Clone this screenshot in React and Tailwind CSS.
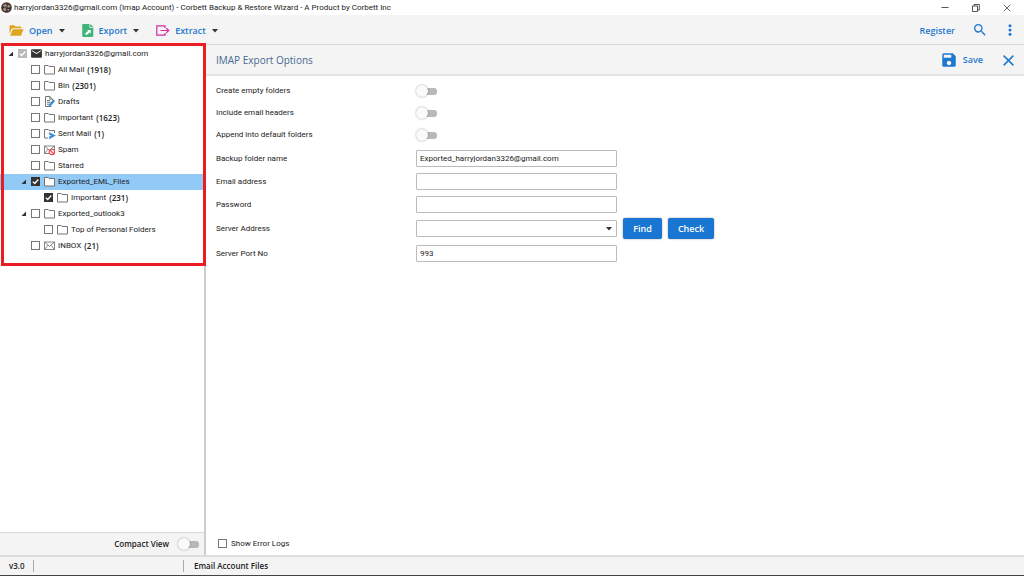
import { useState } from 'react'
import { MdEmail, MdSave, MdSearch } from 'react-icons/md'

const tree = [
  { id: 'root', depth: 0, label: 'harryjordan3326@gmail.com', icon: 'account', open: true, state: 'partial' },
  { id: 'all', depth: 1, label: 'All Mail', count: 1918, icon: 'folder' },
  { id: 'bin', depth: 1, label: 'Bin', count: 2301, icon: 'folder' },
  { id: 'drafts', depth: 1, label: 'Drafts', icon: 'draft' },
  { id: 'important', depth: 1, label: 'Important', count: 1623, icon: 'folder' },
  { id: 'sent', depth: 1, label: 'Sent Mail', count: 1, icon: 'sent' },
  { id: 'spam', depth: 1, label: 'Spam', icon: 'spam' },
  { id: 'starred', depth: 1, label: 'Starred', icon: 'folder' },
  { id: 'eml', depth: 1, label: 'Exported_EML_Files', icon: 'folder', open: true, state: 'checked', selected: true },
  { id: 'eml-important', depth: 2, label: 'Important', count: 231, icon: 'folder', state: 'checked' },
  { id: 'outlook', depth: 1, label: 'Exported_outlook3', icon: 'folder', open: true },
  { id: 'top', depth: 2, label: 'Top of Personal Folders', icon: 'folder' },
  { id: 'inbox', depth: 1, label: 'INBOX', count: 21, icon: 'mail' },
]

const indents = ['pl-[7px]', 'pl-[20px]', 'pl-[33px]']

function Caret() {
  return (
    <svg viewBox="0 0 6 4" className="w-[6px] h-[4px]" fill="#333">
      <path d="M0 0h6L3 3.6z" />
    </svg>
  )
}

function TreeIcon({ name }) {
  if (name === 'account') return <MdEmail className="w-[13px] h-[13px] -mx-px text-[#333] shrink-0" />
  return (
    <svg viewBox="0 0 11 11" className="w-[11px] h-[11px] shrink-0 overflow-visible">
      {name === 'folder' && (
        <path d="M.5 10V1.5h3.7l.8 1h5.5V10z" fill="#fff" stroke="#666" strokeWidth=".9" />
      )}
      {name === 'draft' && (
        <g fill="none" stroke="#666" strokeWidth=".9">
          <path d="M7.5 10.5h-6V.5h4.3l2.7 2.7v1M5.8.5v2.7h2.7M3 4.5h3M3 6.3h3.5M3 8.2h2" />
          <path d="M10.2 4.2 5.8 9.2" stroke="#2f86d6" strokeWidth="2.2" />
          <path d="m5 8.4-.6 2 2-.6z" fill="#2f86d6" stroke="none" />
        </g>
      )}
      {name === 'sent' && (
        <>
          <path d="M4 10H.5V1.5h3.7l.8 1h5.5V5" fill="none" stroke="#666" strokeWidth=".9" />
          <path d="M5 4.4 11.5 7.6 5 11l.8-2.8 3-.6-3-.6z" fill="#2f86d6" stroke="#2f86d6" strokeWidth=".4" />
        </>
      )}
      {(name === 'spam' || name === 'mail') && (
        <path d="M.5 2h10v7.5H.5zM.5 2l5 4.3 5-4.3M.5 9.5 4 5.2M10.5 9.5 7 5.2" fill="none" stroke="#555" strokeWidth=".7" />
      )}
      {name === 'spam' && (
        <g stroke="#e8434a" strokeWidth="1.1">
          <circle cx="7.9" cy="7.9" r="2.7" fill="#fff" />
          <path d="m6 6 3.8 3.8" />
        </g>
      )}
    </svg>
  )
}

function CheckBox({ id, state }) {
  const [on, setOn] = useState(Boolean(state))
  const tone = state === 'partial' ? 'border-[#b9b9b9] checked:bg-[#b9b9b9]' : 'border-[#777] checked:bg-[#333] checked:border-[#333]'
  return (
    <span className="grid w-[9px] h-[9px] shrink-0">
      <input
        id={id}
        type="checkbox"
        checked={on}
        onChange={(e) => setOn(e.target.checked)}
        className={`peer col-start-1 row-start-1 appearance-none w-[9px] h-[9px] border bg-white ${tone}`}
      />
      <svg viewBox="0 0 9 9" className="col-start-1 row-start-1 w-[9px] h-[9px] pointer-events-none invisible peer-checked:visible" fill="none" stroke="#fff" strokeWidth="1.3">
        <path d="m1.8 4.6 1.9 1.9 3.6-4" />
      </svg>
    </span>
  )
}

function Toggle({ id }) {
  const [on, setOn] = useState(false)
  return (
    <span className="grid items-center w-[21px] h-[13px] shrink-0">
      <input
        id={id}
        type="checkbox"
        role="switch"
        checked={on}
        onChange={(e) => setOn(e.target.checked)}
        className="peer col-start-1 row-start-1 appearance-none w-[17px] h-[7px] ml-[4px] rounded-[3px] bg-[#b8b8b8] checked:bg-[#8fc2f0]"
      />
      <span className="col-start-1 row-start-1 w-[12px] h-[12px] rounded-full bg-[#fafafa] shadow-[0_0_2px_rgba(0,0,0,0.4)] pointer-events-none peer-checked:ml-[9px]" />
    </span>
  )
}

function TreeRow({ node }) {
  return (
    <li className={`flex items-center h-4 pb-px ${indents[node.depth]} ${node.selected ? 'bg-[#91c9f7]' : ''}`}>
      <span className="w-[11px] shrink-0 flex">
        {node.open && (
          <svg viewBox="0 0 5 5" className="w-[5px] h-[5px] ml-px" fill="#333">
            <path d="M5 .5v4.5H.5z" />
          </svg>
        )}
      </span>
      <CheckBox id={`node-${node.id}`} state={node.state} />
      <label htmlFor={`node-${node.id}`} className="flex items-center ml-[4px] whitespace-nowrap">
        <TreeIcon name={node.icon} />
        <span className="ml-[3px]">{node.label}</span>
        {node.count && <span className="ml-[3px] font-semibold font-['Open_Sans',sans-serif]">({node.count})</span>}
      </label>
    </li>
  )
}

function ToolButton({ icon, children, className }) {
  return (
    <button type="button" className={`flex items-center text-[9px] font-semibold text-[#1f78cf] font-['Open_Sans',sans-serif] ${className}`}>
      {icon}
      <span className="ml-[5px] mr-[6px]">{children}</span>
      <Caret />
    </button>
  )
}

function Field({ id, label, tall, children }) {
  return (
    <div className={`flex items-center ${tall ? 'h-[25px]' : 'h-[23px]'}`}>
      <label htmlFor={id} className="w-[200px] shrink-0">{label}</label>
      {children}
    </div>
  )
}

const inputStyle = 'w-[201px] h-[17px] px-[3px] border border-[#bbb] rounded-[1px] bg-white outline-none'
const blueButton = "ml-[6px] h-[21px] rounded-[2px] bg-[#1976d2] text-white text-[9px] font-semibold font-['Open_Sans',sans-serif] shadow-[0_0_2px_rgba(0,0,0,0.4)]"

export default function App() {
  return (
    <div className="flex flex-col h-screen bg-white text-[8px] leading-[12px] text-[#222] font-['Roboto','Open_Sans',sans-serif] overflow-hidden">
      {/* Title bar */}
      <header className="flex items-center h-[15px] shrink-0 pl-px">
        <svg viewBox="0 0 12 12" className="w-[11px] h-[11px]">
          <circle cx="6" cy="6" r="5.8" fill="#40322e" />
          <path d="M2 3.5 5 2l1.5 2L4 5zM7.5 3l2.7 1.2-1 2.2-2-1zM2 7l3-.5L6 9l-2.5 1z" fill="#b9917c" />
          <path d="m6.5 7.5 3 .5-1.5 2zM1 5l4 1 6-1" fill="#84939a" />
        </svg>
        <h1 className="ml-[2px]">harryjordan3326@gmail.com (Imap Account) - Corbett Backup &amp; Restore Wizard - A Product by Corbett Inc</h1>
        <div className="ml-auto flex items-center gap-[23px] pr-[13px]">
          <button type="button" aria-label="Minimize">
            <svg viewBox="0 0 8 8" className="w-2 h-2" stroke="#555"><path d="M.5 3.5h7" /></svg>
          </button>
          <button type="button" aria-label="Restore">
            <svg viewBox="0 0 8 8" className="w-2 h-2" fill="none" stroke="#444" strokeWidth=".9"><path d="M.5 2h5v5.5h-5zM2 2V.5h5.3V6H5.5" /></svg>
          </button>
          <button type="button" aria-label="Close window">
            <svg viewBox="0 0 8 8" className="w-2 h-2" stroke="#444" strokeWidth=".8"><path d="m.8.8 6.4 6.4M7.2.8.8 7.2" /></svg>
          </button>
        </div>
      </header>

      {/* Toolbar */}
      <nav className="flex items-center h-[30px] shrink-0 bg-[#f4f4f4] border-b border-[#d8d8d8] pt-[2px] pl-[9px] pr-[12px]">
        <ToolButton
          icon={
            <svg viewBox="0 0 14 11" className="w-[15px] h-[11px]" fill="#dda520">
              <path d="M0 9V1.2C0 .5.4.2 1 .2h3.6l1.2 1.3h5c.7 0 1 .4 1 1v.8H3.2c-.6 0-1 .3-1.2.8z" />
              <path d="M3.3 4.2H14l-2.2 5.9c-.2.4-.5.6-1 .6H.6z" />
            </svg>
          }
        >
          Open
        </ToolButton>
        <ToolButton
          className="ml-[17px]"
          icon={
            <svg viewBox="0 0 12 13" className="w-[12px] h-[13px]">
              <path d="M1.3 0h6.2v3.7h3.8v8.1c0 .7-.5 1.2-1.2 1.2H1.3C.6 13 .2 12.5.2 11.8V1.2C.2.5.6 0 1.3 0zM8.3 0l3 2.9h-3z" fill="#3fb57a" />
              <path d="M3.4 10.8V9.2l2.7-2.3-1-1h3.6v3.5l-1.1-1-2.6 2.4z" fill="#fff" />
            </svg>
          }
        >
          Export
        </ToolButton>
        <ToolButton
          className="ml-[17px]"
          icon={
            <svg viewBox="0 0 14 11" className="w-[14px] h-[11px]" fill="none" stroke="#d42aa5" strokeWidth="1.2">
              <path d="M9 3V.9H.8v9.2H9V8M4.5 5.5h8M10.2 3.1l2.6 2.4-2.6 2.4" />
            </svg>
          }
        >
          Extract
        </ToolButton>
        <div className="ml-auto flex items-center text-[#1f78cf]">
          <a href="#register" className="text-[9px] font-semibold font-['Open_Sans',sans-serif]">Register</a>
          <button type="button" aria-label="Search" className="ml-[17px] -mt-[2px]">
            <MdSearch className="w-[16px] h-[16px]" />
          </button>
          <button type="button" aria-label="More" className="ml-[20px] -mt-[2px]">
            <svg viewBox="0 0 4 12" className="w-[4px] h-[12px]" fill="currentColor">
              <circle cx="2" cy="1.7" r="1.5" />
              <circle cx="2" cy="6" r="1.5" />
              <circle cx="2" cy="10.3" r="1.5" />
            </svg>
          </button>
        </div>
      </nav>

      <div className="flex flex-1 min-h-0">
        {/* Folder tree */}
        <aside className="relative flex flex-col w-[206px] shrink-0 border-r-2 border-[#ccc]">
          <ul className="pt-px">
            {tree.map((node) => <TreeRow key={node.id} node={node} />)}
          </ul>
          <div className="absolute -top-[2px] left-px -right-[2px] h-[223px] border-3 border-[#ec1c24] pointer-events-none" />
          <div className="mt-auto flex items-center justify-end h-[23px] pr-[5px] bg-[#f4f4f4] border-t border-[#d8d8d8]">
            <label htmlFor="compact" className="font-semibold mr-[9px] font-['Open_Sans',sans-serif]">Compact View</label>
            <Toggle id="compact" />
          </div>
        </aside>

        {/* Export options */}
        <main className="flex flex-col flex-1 min-w-0">
          <div className="flex items-center h-[31px] shrink-0 pt-px pl-[10px] pr-[10px] bg-[#f4f4f4] border-b-2 border-[#e4e4e4]">
            <h2 className="text-[10px] text-[#476a92] font-['Open_Sans',sans-serif]">IMAP Export Options</h2>
            <button type="button" className="ml-auto flex items-center gap-[5px] text-[9px] font-semibold text-[#1f78cf] font-['Open_Sans',sans-serif]">
              <MdSave className="w-[18px] h-[18px]" />
              Save
            </button>
            <button type="button" aria-label="Close options" className="ml-[20px] text-[#1f78cf]">
              <svg viewBox="0 0 11 11" className="w-[11px] h-[11px]" stroke="currentColor" strokeWidth="1.5"><path d="m.6.6 9.8 9.8M10.4.6.6 10.4" /></svg>
            </button>
          </div>

          <form className="pl-[10px] pt-[4px]" onSubmit={(e) => e.preventDefault()}>
            <div className="flex items-center h-[22px]">
              <label htmlFor="empty" className="w-[200px]">Create empty folders</label>
              <Toggle id="empty" />
            </div>
            <div className="flex items-center h-[22px]">
              <label htmlFor="headers" className="w-[200px]">Include email headers</label>
              <Toggle id="headers" />
            </div>
            <div className="flex items-center h-[22px]">
              <label htmlFor="append" className="w-[200px]">Append into default folders</label>
              <Toggle id="append" />
            </div>
            <div className="pt-px">
              <Field id="folder" label="Backup folder name">
                <input id="folder" type="text" defaultValue="Exported_harryjordan3326@gmail.com" className={inputStyle} />
              </Field>
              <Field id="email" label="Email address">
                <input id="email" type="email" className={inputStyle} />
              </Field>
              <Field id="password" label="Password">
                <input id="password" type="password" className={inputStyle} />
              </Field>
              <Field id="server" label="Server Address" tall>
                <span className="grid items-center">
                  <select id="server" defaultValue="" className={`col-start-1 row-start-1 appearance-none ${inputStyle}`}>
                    <option value="" />
                  </select>
                  <span className="col-start-1 row-start-1 justify-self-end mr-[5px] pointer-events-none"><Caret /></span>
                </span>
                <button type="button" className={`w-[39px] ${blueButton}`}>Find</button>
                <button type="button" className={`w-[46px] ${blueButton}`}>Check</button>
              </Field>
              <Field id="port" label="Server Port No" tall>
                <input id="port" type="text" defaultValue="993" className={inputStyle} />
              </Field>
            </div>
          </form>

          <div className="mt-auto flex items-center h-[23px] pl-[12px] gap-[4px]">
            <CheckBox id="logs" />
            <label htmlFor="logs">Show Error Logs</label>
          </div>
        </main>
      </div>

      {/* Status bar */}
      <footer className="flex items-center h-[21px] shrink-0 bg-[#f4f4f4] border-t-2 border-t-[#ddd] border-b border-b-[#444] font-semibold font-['Open_Sans',sans-serif]">
        <span className="w-[34px] pl-[9px] border-r border-[#aaa]">v3.0</span>
        <span className="w-[150px] h-[12px] border-r border-[#aaa]" />
        <span className="pl-[10px]">Email Account Files</span>
      </footer>
    </div>
  )
}
